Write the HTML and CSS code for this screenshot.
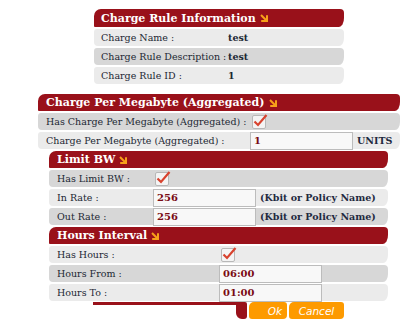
FILE: index.html
```html
<!DOCTYPE html>
<html>
<head>
<meta charset="utf-8">
<link rel="stylesheet" href="styles.css">
</head>
<body>
<div class="page">
  <section class="sec sec-info">
    <div class="hdr">Charge Rule Information <svg class="arw" viewBox="0 0 8 8" width="8" height="8"><path d="M1 1 L6.2 6.2" /><path d="M7 1.2 V7 H1.2" /></svg></div>
    <div class="row light"><span class="lbl l1">Charge Name :</span><span class="val">test</span></div>
    <div class="row dark"><span class="lbl l1">Charge Rule Description :</span><span class="val">test</span></div>
    <div class="row light"><span class="lbl l1">Charge Rule ID :</span><span class="val">1</span></div>
  </section>

  <section class="sec sec-mb">
    <div class="hdr">Charge Per Megabyte (Aggregated) <svg class="arw" viewBox="0 0 8 8" width="8" height="8"><path d="M1 1 L6.2 6.2" /><path d="M7 1.2 V7 H1.2" /></svg></div>
    <div class="row dark"><span class="lbl l2">Has Charge Per Megabyte (Aggregated) :</span><span class="chk"><svg viewBox="0 0 16 16" width="16" height="16"><path d="M2.5 8.5 L6 12 L14.5 2" /></svg></span></div>
    <div class="row light"><span class="lbl l2">Charge Per Megabyte (Aggregated) :</span><span class="inp">1</span><span class="unit">UNITS</span></div>
  </section>

  <section class="sec sec-sub">
    <div class="hdr">Limit BW <svg class="arw" viewBox="0 0 8 8" width="8" height="8"><path d="M1 1 L6.2 6.2" /><path d="M7 1.2 V7 H1.2" /></svg></div>
    <div class="row dark"><span class="lbl l3">Has Limit BW :</span><span class="chk"><svg viewBox="0 0 16 16" width="16" height="16"><path d="M2.5 8.5 L6 12 L14.5 2" /></svg></span></div>
    <div class="row light"><span class="lbl l3">In Rate :</span><span class="inp">256</span><span class="unit">(Kbit or Policy Name)</span></div>
    <div class="row dark"><span class="lbl l3">Out Rate :</span><span class="inp">256</span><span class="unit">(Kbit or Policy Name)</span></div>
  </section>

  <section class="sec sec-sub">
    <div class="hdr">Hours Interval <svg class="arw" viewBox="0 0 8 8" width="8" height="8"><path d="M1 1 L6.2 6.2" /><path d="M7 1.2 V7 H1.2" /></svg></div>
    <div class="row light"><span class="lbl l4">Has Hours :</span><span class="chk"><svg viewBox="0 0 16 16" width="16" height="16"><path d="M2.5 8.5 L6 12 L14.5 2" /></svg></span></div>
    <div class="row dark"><span class="lbl l4">Hours From :</span><span class="inp">06:00</span></div>
    <div class="row light"><span class="lbl l4">Hours To :</span><span class="inp">01:00</span></div>
  </section>

  <div class="footer">
    <div class="fline"></div>
    <div class="ftail"></div>
    <button class="btn ok">Ok</button>
    <button class="btn cancel">Cancel</button>
  </div>
</div>
</body>
</html>
```

FILE: styles.css
```css
html, body {
  margin: 0;
  padding: 0;
  background: #ffffff;
}

.page {
  display: flex;
  flex-direction: column;
  align-items: flex-start;
  padding: 9px 0 0 38px;
  font-family: "DejaVu Serif", serif;
  color: #1c2733;
}

.sec {
  display: flex;
  flex-direction: column;
  gap: 2px;
}

.sec-info {
  width: 250px;
  margin-left: 56px;
}

.sec-mb {
  width: 362px;
  margin-top: 10px;
}

.sec-sub {
  width: 339px;
  margin-left: 11px;
  margin-top: 2px;
}

.hdr {
  height: 18px;
  display: flex;
  align-items: center;
  gap: 4px;
  padding-left: 7px;
  background: #99111a;
  color: #ffffff;
  font-weight: bold;
  font-size: 11px;
  border-radius: 7px 4px 5px 1px / 7px 4px 9px 1px;
}

.sec-mb .hdr,
.sec-sub .hdr {
  height: 17px;
  padding-left: 8px;
}

.arw {
  fill: none;
  stroke: #f7a11a;
  stroke-width: 2;
}

.row {
  height: 17px;
  display: flex;
  align-items: center;
  padding-left: 7px;
  font-size: 9.5px;
  border-radius: 3px 4px 5px 4px / 3px 4px 8px 4px;
}

.sec-mb .row,
.sec-sub .row {
  padding-left: 8px;
}

.light { background: #ebebeb; }
.dark { background: #d7d7d7; }

.lbl {
  flex: none;
  white-space: nowrap;
}

.l1 { width: 127px; }
.l2 { width: 204px; }
.l3 { width: 96px; }
.l4 { width: 162px; }

.val {
  font-weight: bold;
}

.chk {
  width: 12px;
  height: 12px;
  margin-left: 2px;
  border: 1px solid #b8b8b8;
  border-radius: 2px;
  background: #f4f4f4;
  position: relative;
}

.chk svg {
  position: absolute;
  left: -1px;
  top: -3px;
  fill: none;
  stroke: #d8432f;
  stroke-width: 2.2;
}

.inp {
  box-sizing: border-box;
  width: 103px;
  height: 18px;
  border: 1px solid #bcbcbc;
  background: #f8f8f8;
  padding-left: 3px;
  display: flex;
  align-items: center;
  font-weight: bold;
  color: #7a0c14;
  font-size: 10px;
}

.unit {
  margin-left: 4px;
  font-weight: bold;
  color: #1f2a3f;
}

.footer {
  display: flex;
  align-items: flex-start;
  width: 251px;
  margin-left: 55px;
  margin-top: 1px;
}

.fline {
  flex: 1;
  height: 3px;
  background: #99111a;
}

.ftail {
  width: 11px;
  height: 17px;
  background: #99111a;
  border-radius: 0 2px 3px 6px;
}

.btn {
  height: 17px;
  margin: 0 0 0 2px;
  padding: 0 5px 0 0;
  border: none;
  border-radius: 5px 3px 4px 3px;
  background: #fd9a00;
  color: #ffffff;
  font-family: "DejaVu Sans", sans-serif;
  font-style: italic;
  font-weight: normal;
  font-size: 10.5px;
  text-align: right;
}

.ok { width: 38px; }
.cancel { width: 55px; text-align: center; padding: 0; }
```
